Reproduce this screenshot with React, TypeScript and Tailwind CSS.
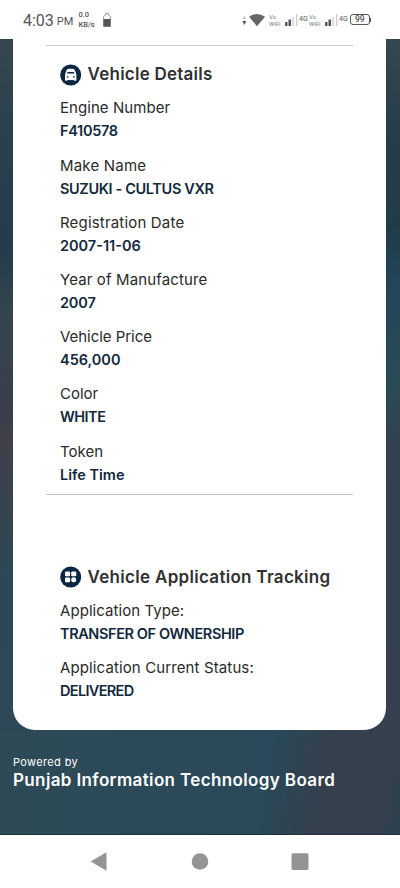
import type { ReactNode } from 'react';
import { clsx } from 'clsx';

interface Field {
  label: string;
  value: string;
  labelClass?: string;
  valueClass?: string;
}

const vehicleFields: Field[] = [
  {
    label: 'Engine Number',
    value: 'F410578',
    labelClass: 'tracking-[0.06px]',
    valueClass: 'tracking-[-0.3px]',
  },
  {
    label: 'Make Name',
    value: 'SUZUKI - CULTUS VXR',
    labelClass: 'tracking-[0.2px]',
    valueClass: 'tracking-[-0.36px]',
  },
  { label: 'Registration Date', value: '2007-11-06', labelClass: 'tracking-[0.18px]' },
  {
    label: 'Year of Manufacture',
    value: '2007',
    labelClass: 'tracking-[0.13px]',
    valueClass: 'tracking-[-0.15px]',
  },
  { label: 'Vehicle Price', value: '456,000', labelClass: 'tracking-[-0.04px]' },
  { label: 'Color', value: 'WHITE', valueClass: 'tracking-[-0.5px]' },
  { label: 'Token', value: 'Life Time' },
];

const trackingFields: Field[] = [
  {
    label: 'Application Type:',
    value: 'TRANSFER OF OWNERSHIP',
    labelClass: 'tracking-[0.06px]',
    valueClass: 'tracking-[-0.4px]',
  },
  {
    label: 'Application Current Status:',
    value: 'DELIVERED',
    labelClass: 'tracking-[0.12px]',
    valueClass: 'tracking-[-0.66px]',
  },
];

export default function App() {
  return (
    <div className="flex h-[888px] w-[400px] flex-col overflow-hidden bg-white font-['Inter',sans-serif]">
      <StatusBar />
      <main className="flex h-[796px] shrink-0 flex-col bg-[linear-gradient(100deg,transparent_0%,transparent_66%,#353f4d_80%,#353f4d_95%,#2b414f_100%),linear-gradient(90deg,#2e4a57,#2b4959_50%,#27485a)] bg-[size:100%_120px] bg-bottom bg-no-repeat">
        <div className="flex h-[691px] bg-[linear-gradient(180deg,#37474f_0%,#2b414f_12%,#243c4e_30%,#34454c_40%,#3b3f4a_54%,#40404a_58%,#36444e_68%,#2c4857_78%,#2d4958_100%),linear-gradient(180deg,#37474f_0%,#283e4a_12%,#223b49_27%,#234558_35%,#2b4a58_48%,#2b4a56_50%,#35414f_59%,#353f4d_100%)] bg-[size:50%_100%] bg-[position:left_top,right_top] bg-no-repeat pl-[13.4px] pr-3.5">
          <div className="w-full rounded-b-[22px] bg-white px-[32.6px] pt-1.5">
            <div className="border-t border-[#c9c9c9]" />
            <section className="px-3.5 pt-[18px]">
              <SectionTitle icon={<CarIcon />}>
                <span className="tracking-[0.24px]">Vehicle Details</span>
              </SectionTitle>
              <FieldList fields={vehicleFields} />
            </section>
            <div className="mt-[8.8px] border-t border-[#c4c4c4]" />
            <section className="px-3.5 pt-[71px]">
              <SectionTitle icon={<GridIcon />}>
                <span className="tracking-[0.3px]">Vehicle Application Tracking</span>
              </SectionTitle>
              <FieldList fields={trackingFields} />
            </section>
          </div>
        </div>
        <footer className="flex grow flex-col border-b border-[#21323c] px-[13px] pt-[25px] text-white">
          <span className="text-[11px] leading-[14px] tracking-[0.36px]">Powered by</span>
          <span className="text-[17px] font-semibold leading-[22px] tracking-[0.37px]">
            Punjab Information Technology Board
          </span>
        </footer>
      </main>
      <NavBar />
    </div>
  );
}

function SectionTitle({ icon, children }: { icon: ReactNode; children: ReactNode }) {
  return (
    <h2 className="flex h-[22px] items-center gap-[5.6px] whitespace-nowrap text-[17px] font-semibold text-[#303030]">
      {icon}
      {children}
    </h2>
  );
}

function FieldList({ fields }: { fields: Field[] }) {
  return (
    <dl className="mt-[10.4px] flex flex-col gap-[11.2px] leading-[23px]">
      {fields.map((f) => (
        <div key={f.label} className="whitespace-nowrap">
          <dt className={clsx('text-[15px] text-[#2a2a2a]', f.labelClass)}>
            <span>{f.label}</span>
          </dt>
          <dd className={clsx('text-[14.5px] font-semibold text-[#13283d]', f.valueClass)}>
            <span>{f.value}</span>
          </dd>
        </div>
      ))}
    </dl>
  );
}

function CarIcon() {
  return (
    <svg viewBox="0 0 22 22" className="size-[22px] shrink-0">
      <circle cx="10.7" cy="11" r="10.5" fill="#0a2640" />
      <path
        d="M7 6.2q.3-.9 1.2-.9h5q.9 0 1.2.9l1.5 4.4v5.6h-1.6v-.6H7.1v.6H5.5v-5.6z"
        fill="#fff"
        stroke="#fff"
        strokeWidth="1"
        strokeLinejoin="round"
      />
      <path d="M7.6 7.9h6.2l.6 1.7H7z" fill="#0a2640" />
      <rect x="6.6" y="12.3" width="2" height="1.2" rx="0.6" fill="#0a2640" />
      <rect x="12.8" y="12.3" width="2" height="1.2" rx="0.6" fill="#0a2640" />
    </svg>
  );
}

function GridIcon() {
  return (
    <svg viewBox="0 0 22 22" className="size-[22px] shrink-0">
      <circle cx="10.7" cy="11" r="10.5" fill="#0a2640" />
      <g fill="#fff">
        <rect x="5" y="5.5" width="5.1" height="4.8" rx="1" />
        <rect x="11.2" y="5.5" width="5.1" height="4.8" rx="1" />
        <rect x="5" y="11.4" width="5.1" height="4.8" rx="1" />
        <circle cx="13.7" cy="13.8" r="2.5" />
      </g>
    </svg>
  );
}

function StatusBar() {
  return (
    <header className="flex h-[39px] shrink-0 items-start justify-between bg-white pl-[23px] pr-[29.5px] pt-[9.5px] font-['Roboto',sans-serif] text-[#555]">
      <div className="flex h-5 items-center">
        <span className="mt-0.5 text-[16px] leading-5">4:03</span>
        <span className="ml-[3px] mt-1 text-[11px] leading-4">PM</span>
        <span className="ml-[5px] flex flex-col text-[7.5px] font-medium leading-[10px]">
          <span>0.0</span>
          <span>KB/s</span>
        </span>
        <svg viewBox="0 0 8 14" className="ml-2 h-3.5 w-2">
          <path d="M.6 13.4V3.3L2.5 2V.6h3V2l1.9 1.3v10.1z" fill="none" stroke="#999" />
          <path d="M.5 6h7v7.5h-7z" fill="#555" />
        </svg>
      </div>
      <div className="flex h-5 items-center">
        <svg viewBox="0 0 24 14" className="mr-[3px] h-3.5 w-6 shrink-0">
          <path d="M.5 6l1.8-3 1.8 3z" fill="#bbb" />
          <path d="M.3 8h4l-2 4z" fill="#555" />
          <path d="M7 3.8q8-5.6 16 0L15 13.3z" fill="#666" />
        </svg>
        <Sim />
        <Sim />
        <span className="ml-px flex h-[11px] w-[19.5px] shrink-0 items-center justify-center rounded-[3px] border border-[#555] text-[8.5px] font-medium leading-none">
          99
        </span>
        <span className="h-1 w-px bg-[#555]" />
      </div>
    </header>
  );
}

function Sim() {
  return (
    <div className="flex w-10 shrink-0 items-center">
      <span className="flex w-[14px] shrink-0 flex-col text-[6px] leading-[7px] text-[#777]">
        <span>Vo</span>
        <span>WiFi</span>
      </span>
      <svg viewBox="0 0 13 12" className="ml-0.5 h-3 w-[13px] shrink-0">
        <path d="M0 8h2.5v4H0zM3.5 5.5H6V12H3.5z" fill="#555" />
        <path d="M7.5 3h1.3v9H7.5zM11 0h1.3v12H11z" fill="#ccc" />
      </svg>
      <span className="ml-px text-[7px] leading-none">4G</span>
    </div>
  );
}

function NavBar() {
  return (
    <nav className="flex h-[53px] items-center bg-white">
      <svg viewBox="0 0 400 53" className="h-[53px] w-[400px]" fill="#949494">
        <path d="M91.5 26.5L106 18v17z" stroke="#949494" strokeLinejoin="round" />
        <circle cx="200" cy="26.5" r="8.3" />
        <rect x="291.5" y="18.3" width="17" height="16.8" rx="1.5" />
      </svg>
    </nav>
  );
}
